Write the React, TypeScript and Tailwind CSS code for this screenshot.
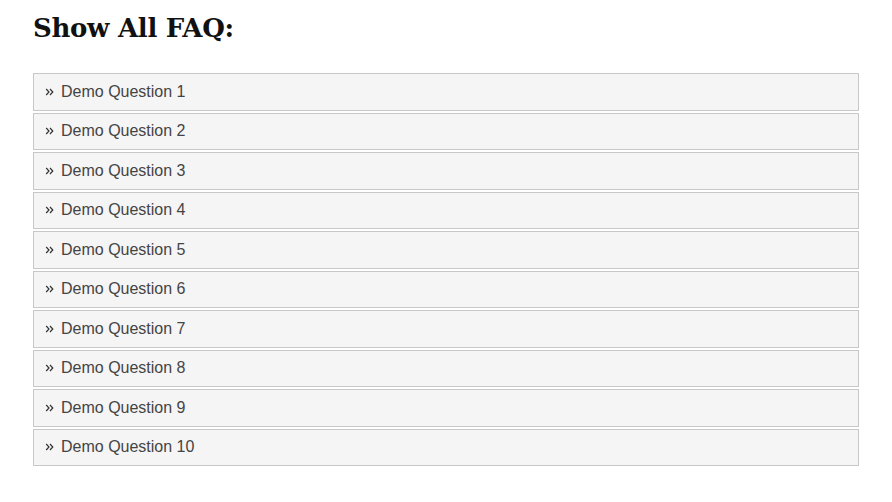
import React from 'react';

const questions = Array.from({ length: 10 }, (_, i) => `Demo Question ${i + 1}`);

const Chevrons = () => (
  <svg width="9" height="8" viewBox="0 0 9 8" className="shrink-0">
    <path d="M1.2 1 L4 4 L1.2 7 M5 1 L7.8 4 L5 7" fill="none" stroke="#333" strokeWidth="1.2" />
  </svg>
);

const App = () => {
  return (
    <div className="w-[892px] h-[502px] bg-white pl-[33px] pr-[33px] pt-[10px]">
      <h1 className="text-[#111] font-bold text-[26px] leading-[36px] tracking-[-0.3px] font-['DejaVu_Serif',serif]">
        Show All FAQ:
      </h1>
      <div className="mt-[27px] flex flex-col">
        {questions.map((q) => (
          <div
            key={q}
            className="h-[37.5px] mb-[2px] flex items-center gap-[7px] pl-[11px] bg-[#f5f5f5] border border-[#c8c8c8] text-[#444] text-[16px] font-['Liberation_Sans',Arial,sans-serif]"
          >
            <Chevrons />
            <span>{q}</span>
          </div>
        ))}
      </div>
    </div>
  );
};

export default App;
